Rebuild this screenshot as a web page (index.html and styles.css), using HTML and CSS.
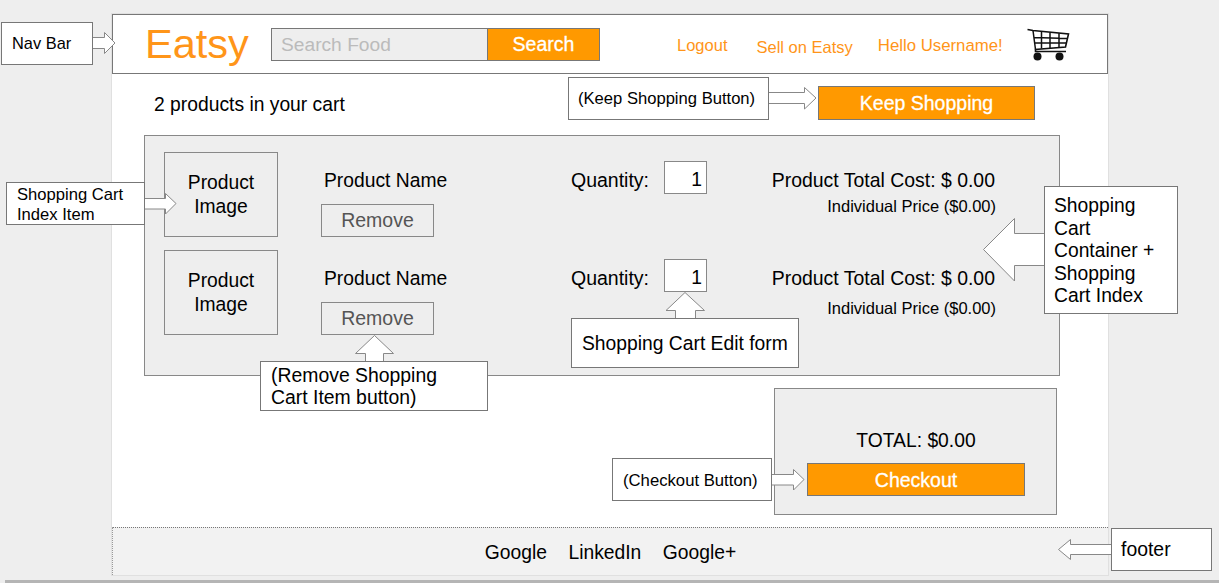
FILE: index.html
```html
<!DOCTYPE html>
<html lang="en">
<head>
<meta charset="utf-8">
<title>Eatsy – Shopping cart wireframe</title>
<link rel="stylesheet" href="styles.css">
</head>
<body>
<div class="site">
  <header class="nav">
    <a class="logo">Eatsy</a>
    <form class="search">
      <span class="search-input">Search Food</span>
      <span class="search-button">Search</span>
    </form>
    <a class="link link-logout">Logout</a>
    <a class="link link-sell">Sell on Eatsy</a>
    <a class="link link-hello">Hello Username!</a>
    <svg class="cart-icon" width="43" height="34" viewBox="0 0 43 34" fill="none" stroke="#111">
      <path d="M0.5 1.5 L6 2.5 L41.5 6 L38.5 19 L8.5 21.5 V23.5 H39" stroke-width="1.6"/>
      <path d="M6 2.5 L8.5 21.5 M14.5 3.5 V20.5 M23 4.5 V20 M32 5.2 V19.5 M7.5 9.5 L40.5 10.5 M8 15 L39.5 15" stroke-width="1.5"/>
      <circle cx="10.5" cy="28.5" r="4" fill="#111" stroke="none"/>
      <circle cx="32.5" cy="28.5" r="4" fill="#111" stroke="none"/>
    </svg>
  </header>

  <div class="summary">
    <p class="count">2 products in your cart</p>
    <a class="action action-keep">Keep Shopping</a>
  </div>

  <section class="cart">
    <article class="item">
      <div class="thumb">Product<br>Image</div>
      <div class="info">
        <div class="name">Product Name</div>
        <a class="remove">Remove</a>
      </div>
      <div class="qty">
        <span class="qty-label">Quantity:</span>
        <span class="qty-input">1</span>
      </div>
      <div class="price">
        <div class="price-total">Product Total Cost: $ 0.00</div>
        <div class="price-each">Individual Price ($0.00)</div>
      </div>
    </article>
    <article class="item">
      <div class="thumb">Product<br>Image</div>
      <div class="info">
        <div class="name">Product Name</div>
        <a class="remove">Remove</a>
      </div>
      <div class="qty">
        <span class="qty-label">Quantity:</span>
        <span class="qty-input">1</span>
      </div>
      <div class="price">
        <div class="price-total">Product Total Cost: $ 0.00</div>
        <div class="price-each price-each-low">Individual Price ($0.00)</div>
      </div>
    </article>
  </section>

  <section class="checkout">
    <div class="grand-total">TOTAL: $0.00</div>
    <a class="action action-checkout">Checkout</a>
  </section>

  <footer class="footer">
    <a>Google</a>
    <a>LinkedIn</a>
    <a>Google+</a>
  </footer>
</div>
<div class="window-edge"></div>

<svg class="arrows" width="1219" height="583" viewBox="0 0 1219 583">
  <polygon points="90,37.5 104.5,37.5 104.5,32.5 115,43 104.5,53.5 104.5,48.5 90,48.5"/>
  <polygon points="142,198.5 165.5,198.5 165.5,193.5 176,203.5 165.5,214 165.5,209 142,209"/>
  <polygon points="767,92.5 804.5,92.5 804.5,87.5 816,98 804.5,109 804.5,103.5 767,103.5"/>
  <polygon points="1046,233.5 1014.5,233.5 1014.5,218.5 983.5,249.5 1014.5,281 1014.5,265.5 1046,265.5"/>
  <polygon points="383.5,363 383.5,353.5 393.5,353.5 374.5,335.5 355.5,353.5 365.5,353.5 365.5,363"/>
  <polygon points="695.5,320 695.5,310.5 704.5,310.5 685,292.5 666,310.5 675.5,310.5 675.5,320"/>
  <polygon points="769,474.5 793.5,474.5 793.5,469.5 804,479.5 793.5,490 793.5,485 769,485"/>
  <polygon points="1113,544.5 1070.5,544.5 1070.5,539.5 1058.5,549.5 1070.5,559.5 1070.5,554.5 1113,554.5"/>
</svg>

<aside class="note note-nav">Nav Bar</aside>
<aside class="note note-item">Shopping Cart<br>Index Item</aside>
<aside class="note note-keep">(Keep Shopping Button)</aside>
<aside class="note note-container">Shopping<br>Cart<br>Container +<br>Shopping<br>Cart Index</aside>
<aside class="note note-remove">(Remove Shopping<br>Cart Item button)</aside>
<aside class="note note-edit">Shopping Cart Edit form</aside>
<aside class="note note-checkout">(Checkout Button)</aside>
<aside class="note note-footer">footer</aside>
</body>
</html>
```

FILE: styles.css
```css
* { box-sizing: border-box; }

html, body { margin: 0; padding: 0; }

body {
  position: relative;
  width: 1219px;
  height: 583px;
  overflow: hidden;
  background: #eeeeee;
  color: #000;
  font-family: "Liberation Sans", Arial, sans-serif;
  font-size: 19.3px;
}

.site {
  display: flex;
  flex-direction: column;
  width: 996px;
  height: 561px;
  margin: 14px 0 0 112px;
  background: #fff;
  box-shadow: 0 0 0 1px #e0e0e0;
}

/* Nav */
.nav {
  display: flex;
  align-items: center;
  flex: none;
  height: 60px;
  padding-left: 32px;
  border: 1px solid #777;
  background: #fff;
}

.logo {
  width: 104px;
  color: #ff9519;
  font-size: 41.5px;
  line-height: 48px;
  white-space: nowrap;
}

.search {
  display: flex;
  width: 329px;
  height: 33px;
  margin-left: 22px;
  border: 1px solid #777;
}

.search-input {
  flex: 1;
  padding-left: 9px;
  background: #eeeeee;
  color: #bbbbbb;
  font-size: 19.2px;
  line-height: 31px;
}

.search-button {
  width: 112px;
  border-left: 1px solid #777;
  background: #ff9900;
  color: #fff;
  font-size: 19.5px;
  line-height: 31px;
  text-align: center;
  -webkit-text-stroke: 0.3px #fff;
}

.link {
  color: #ff9519;
  font-size: 16.5px;
  line-height: 20px;
  white-space: nowrap;
}

.link-logout { margin: 1px 0 0 77px; }
.link-sell { margin: 5px 0 0 29px; }
.link-hello { margin: 3px 0 0 25px; font-size: 16.8px; }

.cart-icon {
  flex: none;
  margin: 2px 0 0 24px;
}

/* Summary row */
.summary {
  display: flex;
  align-items: flex-start;
  flex: none;
  height: 61px;
  padding: 0 73px 0 42px;
}

.count {
  margin: 19px 0 0;
  font-size: 19.3px;
  line-height: 24px;
}

.action {
  display: block;
  border: 1px solid #777;
  background: #ff9900;
  color: #fff;
  font-size: 19.5px;
  line-height: 32px;
  text-align: center;
  -webkit-text-stroke: 0.3px #fff;
}

.action-keep {
  width: 217px;
  height: 34px;
  margin: 12px 0 0 auto;
}

/* Cart */
.cart {
  display: flex;
  flex-direction: column;
  flex: none;
  gap: 13px;
  width: 916px;
  height: 241px;
  margin-left: 32px;
  padding: 16px 0 0 19px;
  border: 1px solid #888;
  background: #eeeeee;
}

.item {
  display: flex;
  flex: none;
  height: 85px;
}

.thumb {
  display: flex;
  align-items: center;
  justify-content: center;
  width: 114px;
  height: 85px;
  padding-top: 1px;
  border: 1px solid #888;
  text-align: center;
  line-height: 24px;
}

.info {
  width: 113px;
  margin-left: 43px;
  padding-top: 17px;
}

.name {
  height: 24px;
  padding-left: 3px;
  line-height: 24px;
  white-space: nowrap;
}

.remove {
  display: block;
  height: 33px;
  margin-top: 11px;
  border: 1px solid #888;
  color: #555;
  font-size: 19.5px;
  line-height: 31px;
  text-align: center;
}

.qty {
  display: flex;
  align-items: flex-start;
  width: 136px;
  margin-left: 137px;
}

.qty-label {
  width: 93px;
  margin-top: 16px;
  font-size: 19.5px;
  line-height: 24px;
}

.qty-input {
  width: 43px;
  height: 33px;
  margin-top: 9px;
  padding: 2px 4px 0 0;
  border: 1px solid #888;
  background: #fff;
  line-height: 31px;
  text-align: right;
}

.price {
  width: 289px;
  padding-top: 16px;
  text-align: right;
  white-space: nowrap;
}

.price-total {
  padding-right: 1px;
  font-size: 19.45px;
  line-height: 24px;
}

.price-each {
  margin-top: 4px;
  font-size: 16.5px;
  line-height: 20px;
}

.price-each-low { margin-top: 8px; }

/* Checkout */
.checkout {
  flex: none;
  width: 283px;
  height: 127px;
  margin: 12px 0 0 662px;
  padding: 40px 0 0 32px;
  border: 1px solid #888;
  background: #eeeeee;
}

.grand-total {
  width: 218px;
  line-height: 24px;
  text-align: center;
}

.action-checkout {
  width: 218px;
  height: 33px;
  margin-top: 10px;
}

/* Footer */
.footer {
  display: flex;
  align-items: center;
  justify-content: center;
  flex: none;
  gap: 21.5px;
  height: 48px;
  margin-top: auto;
  padding-top: 2px;
  border-top: 1px dotted #777;
  border-left: 1px dotted #999;
  background: #f2f2f2;
}

.window-edge {
  height: 3px;
  margin: 5px 0 0 5px;
  background: #b5b5b5;
}

/* Annotation layer */
.arrows {
  position: absolute;
  top: 0;
  left: 0;
}

.arrows polygon {
  fill: #fff;
  stroke: #888;
  stroke-width: 1;
}

.note {
  position: absolute;
  border: 1px solid #777;
  background: #fff;
  white-space: nowrap;
}

.note-nav {
  left: 1px; top: 22px; width: 92px; height: 43px;
  padding-left: 10px;
  font-size: 16.4px;
  line-height: 41px;
}

.note-item {
  left: 6px; top: 182px; width: 139px; height: 43px;
  padding: 2px 0 0 10px;
  font-size: 16.6px;
  line-height: 20px;
}

.note-keep {
  left: 568px; top: 77px; width: 201px; height: 43px;
  padding-left: 9px;
  font-size: 16.6px;
  line-height: 41px;
}

.note-container {
  left: 1044px; top: 186px; width: 134px; height: 128px;
  padding: 8px 0 0 9px;
  font-size: 19.3px;
  line-height: 22.6px;
}

.note-remove {
  left: 260px; top: 361px; width: 228px; height: 50px;
  padding: 2px 0 0 10px;
  font-size: 19.4px;
  line-height: 22px;
}

.note-edit {
  left: 571px; top: 318px; width: 228px; height: 50px;
  padding-left: 10px;
  font-size: 19.3px;
  line-height: 50px;
}

.note-checkout {
  left: 612px; top: 458px; width: 160px; height: 43px;
  padding-left: 10px;
  font-size: 16.7px;
  line-height: 43px;
}

.note-footer {
  left: 1111px; top: 528px; width: 101px; height: 43px;
  padding-left: 9px;
  font-size: 19.4px;
  line-height: 40px;
}
```
